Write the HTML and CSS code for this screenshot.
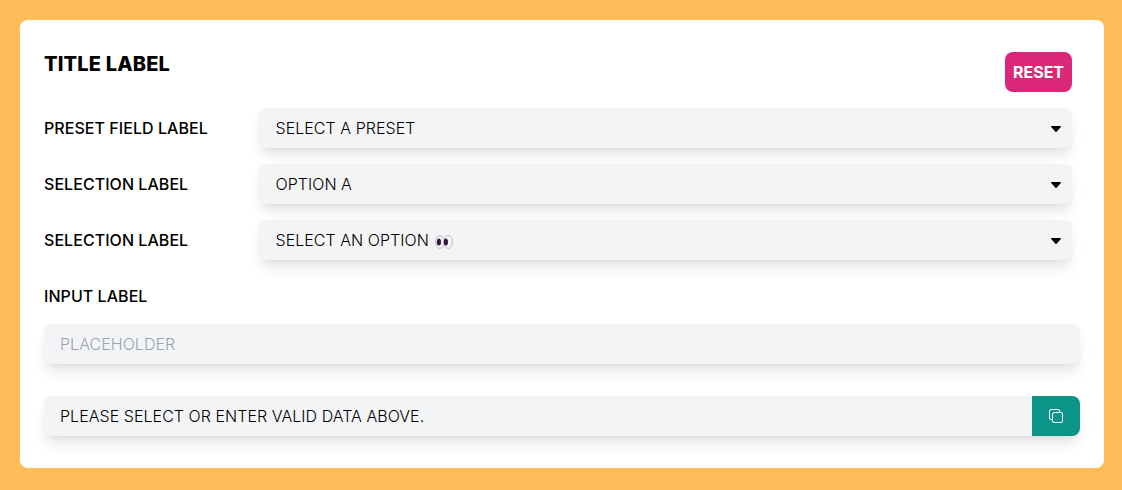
FILE: index.html
```html
<!DOCTYPE html>
<html lang="en">
<head>
<meta charset="utf-8">
<title>Form</title>
<link rel="stylesheet" href="styles.css">
</head>
<body>
<main class="card">
  <header class="head">
    <h1 class="title">TITLE LABEL</h1>
    <button class="reset" type="button">RESET</button>
  </header>
  <div class="row">
    <span class="label">PRESET FIELD LABEL</span>
    <div class="select"><span>SELECT A PRESET</span><svg class="caret" viewBox="0 0 10 6"><path d="M.7 0h8.600q1 .1.5 1L5.900 5.500q-.9.8-1.800 0L.2 1Q-.3.1.7 0z"/></svg></div>
  </div>
  <div class="row">
    <span class="label">SELECTION LABEL</span>
    <div class="select"><span>OPTION A</span><svg class="caret" viewBox="0 0 10 6"><path d="M.7 0h8.600q1 .1.5 1L5.900 5.500q-.9.8-1.800 0L.2 1Q-.3.1.7 0z"/></svg></div>
  </div>
  <div class="row">
    <span class="label">SELECTION LABEL</span>
    <div class="select"><span>SELECT AN OPTION</span><svg class="eyes" viewBox="0 0 18 14"><g fill="#f4f2f5" stroke="#bab8bd" stroke-width=".9"><ellipse cx="4.900" cy="7" rx="4.400" ry="6.500"/><ellipse cx="13.100" cy="7" rx="4.400" ry="6.500"/></g><g fill="#321b41"><ellipse cx="3.900" cy="6.900" rx="2.100" ry="3.500"/><ellipse cx="10.900" cy="6.900" rx="2.100" ry="3.500"/></g></svg><svg class="caret" viewBox="0 0 10 6"><path d="M.7 0h8.600q1 .1.5 1L5.900 5.500q-.9.8-1.800 0L.2 1Q-.3.1.7 0z"/></svg></div>
  </div>
  <label class="label input-label" for="entry">INPUT LABEL</label>
  <input class="entry" id="entry" placeholder="PLACEHOLDER">
  <div class="result">
    <span class="message">PLEASE SELECT OR ENTER VALID DATA ABOVE.</span>
    <button class="copy" type="button" aria-label="Copy"><svg viewBox="0 0 14 14"><path d="M3.500 10.500H2A1.500 1.500 0 0 1 .5 9V2A1.500 1.500 0 0 1 2 .5h7A1.500 1.500 0 0 1 10.500 2v1.500M5 3.500h7A1.500 1.500 0 0 1 13.500 5v7a1.500 1.500 0 0 1-1.500 1.500H5A1.500 1.500 0 0 1 3.500 12V5A1.500 1.500 0 0 1 5 3.500z"/></svg></button>
  </div>
</main>
</body>
</html>
```
FILE: styles.css
```css
* { box-sizing: border-box; }
body { margin: 0; min-height: 490px; padding: 20px 18px 22px 20px; background: #ffbd59; font: 16px/24px Inter, sans-serif; color: #000; }
.card { height: 448px; padding: 32px 24px; background: #fff; border-radius: 8px; }
.head { display: flex; justify-content: space-between; align-items: flex-start; height: 56px; padding-right: 8px; }
.title { margin: 0; font-size: 20px; line-height: 24px; font-weight: 800; letter-spacing: .17px; }
.reset { width: 67px; height: 40px; padding: 0; border: 0; border-radius: 8px; background: #db2777; color: #fff; font: 650 16px/24px Inter, sans-serif; }
.row { display: flex; align-items: center; height: 40px; margin: 0 8px 16px 0; }
.label { width: 215px; font-weight: 500; letter-spacing: .05px; }
.select { flex: 1; display: flex; align-items: center; height: 40px; padding: 0 11px 0 16.5px; border-radius: 6px; }
.select, .entry, .result { background: #f3f4f6; box-shadow: 0 10px 15px -3px #0000001a, 0 4px 6px -2px #0000000d; }
.select, .entry, .message { font-weight: 300; letter-spacing: .04px; }
.caret { width: 10px; height: 6px; margin: 2px 0 0 auto; }
.eyes { width: 18px; height: 14px; margin: 4px 0 0 6px; }
.input-label { display: block; margin-top: 24px; }
.entry { display: block; width: 100%; height: 40px; margin-top: 16px; padding: 0 16px; border: 0; border-radius: 6px; font-family: Inter, sans-serif; font-size: 16px; }
.entry::placeholder { color: #9ca3af; opacity: 1; }
.result { display: flex; align-items: center; height: 40px; margin-top: 32px; border-radius: 6px 8px 8px 6px; overflow: hidden; }
.message { flex: 1; padding-left: 16px; }
.copy { width: 48px; height: 40px; padding: 0; border: 0; background: #0d9488; display: flex; align-items: center; justify-content: center; }
.copy svg { width: 14px; height: 14px; fill: none; stroke: #fff; stroke-width: 1; }
```
